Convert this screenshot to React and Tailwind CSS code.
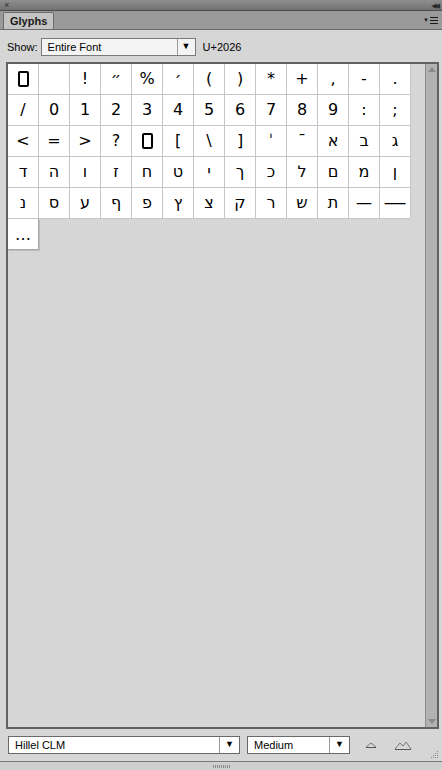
import React from "react";

const rows = [
  ["box", " ", "!", "״", "%", "׳", "(", ")", "*", "+", ",", "-", "."],
  ["/", "0", "1", "2", "3", "4", "5", "6", "7", "8", "9", ":", ";"],
  ["<", "=", ">", "?", "box", "[", "\\", "]", "ˈ", "ˉ", "א", "ב", "ג"],
  ["ד", "ה", "ו", "ז", "ח", "ט", "י", "ך", "כ", "ל", "ם", "מ", "ן"],
  ["נ", "ס", "ע", "ף", "פ", "ץ", "צ", "ק", "ר", "ש", "ת", "—", "wide"],
];

const Cell = ({ g }) => (
  <div className="w-[31px] h-[31px] bg-white border-r border-b border-[#c6c6c6] flex items-center justify-center text-[16px] text-black leading-none font-['DejaVu_Sans',sans-serif]">
    {g === "box" ? (
      <div className="w-[11px] h-[16px] border-2 border-black rounded-[2px]" />
    ) : g === "wide" ? (
      <span className="inline-block scale-x-[1.45]">—</span>
    ) : (
      <span>{g}</span>
    )}
  </div>
);

const Dropdown = ({ label, width, btn = 20 }) => (
  <div
    className="h-[18px] flex border border-[#6a6a6a] bg-white"
    style={{ width }}
  >
    <div className="flex-1 flex items-center pl-[6px] text-[11px] text-black">{label}</div>
    <div
      className="border-l border-[#9a9a9a] flex items-center justify-center text-[9px] text-black"
      style={{ width: btn }}
    >
      ▼
    </div>
  </div>
);

export default function App() {
  return (
    <div
      className="w-[442px] h-[770px] bg-[#d6d6d6] flex flex-col overflow-hidden"
      style={{ fontFamily: '"Liberation Sans", "DejaVu Sans", sans-serif' }}
    >
      {/* title strip */}
      <div className="h-[11px] bg-gradient-to-b from-[#8e8e8e] to-[#727272] border-b border-[#4a4a4a] flex items-center justify-between px-[4px] text-[9px] leading-none text-[#2a2a2a]">
        <span>×</span>
        <span className="text-[7px] tracking-[-2px]">◀◀</span>
      </div>

      {/* tab bar */}
      <div className="h-[19px] bg-[#9a9a9a] border-b border-[#6c6c6c] flex items-end justify-between pl-[3px] pr-[4px]">
        <div className="h-[17px] px-[6px] bg-[#c4c4c4] border border-b-0 border-[#6c6c6c] rounded-t-[2px] flex items-center text-[11px] font-bold text-[#1a1a1a]">
          Glyphs
        </div>
        <div className="h-full flex items-center gap-[1px] text-[#1a1a1a]">
          <span className="text-[6px]">▼</span>
          <svg width="8" height="7" viewBox="0 0 8 7">
            <rect x="0" y="0" width="8" height="1" fill="#1a1a1a" />
            <rect x="0" y="3" width="8" height="1" fill="#1a1a1a" />
            <rect x="0" y="6" width="8" height="1" fill="#1a1a1a" />
          </svg>
        </div>
      </div>

      {/* show row */}
      <div className="h-[32px] flex items-center pl-[7px] pt-[2px] text-[11px] text-black">
        <span className="mr-[3px]">Show:</span>
        <div className="w-[155px] h-[18px] flex border border-[#7a7a7a] bg-[#f4f4f4]">
          <div className="flex-1 flex items-center pl-[6px]">Entire Font</div>
          <div className="w-[18px] border-l border-[#9a9a9a] flex items-center justify-center text-[9px]">▼</div>
        </div>
        <span className="ml-[7px]">U+2026</span>
      </div>

      {/* glyph frame */}
      <div className="ml-[6px] mr-[3px] h-[667px] border-2 border-[#616161] flex">
        <div className="flex-1 flex flex-col">
          {rows.map((r, i) => (
            <div key={i} className="flex">
              {r.map((g, j) => (
                <Cell key={j} g={g} />
              ))}
            </div>
          ))}
          <div className="flex">
            <div className="w-[31px] h-[31px] bg-white border-r border-b border-[#a8a8a8] shadow-[1px_1px_0_#bdbdbd] flex items-end justify-center pb-[6px] text-[16px] leading-none font-['DejaVu_Sans',sans-serif]">
              …
            </div>
          </div>
        </div>
        <div className="w-[12px] bg-[#b2b2b2] border-l border-[#8e8e8e] flex flex-col justify-between items-center py-[3px]">
          <div className="w-0 h-0 border-l-[4px] border-r-[4px] border-b-[5px] border-l-transparent border-r-transparent border-b-[#8a8a8a]" />
          <div className="w-0 h-0 border-l-[4px] border-r-[4px] border-t-[5px] border-l-transparent border-r-transparent border-t-[#8a8a8a]" />
        </div>
      </div>

      {/* bottom controls */}
      <div className="h-[32px] flex items-center pl-[8px] pr-[3px]">
        <Dropdown label="Hillel CLM" width={232} />
        <div className="w-[7px]" />
        <Dropdown label="Medium" width={103} />
        <div className="ml-[15px] flex items-end">
          <svg width="12" height="6" viewBox="0 0 12 6">
            <path d="M1 5 L6 1 L11 5" fill="none" stroke="#777" strokeWidth="1" />
            <path d="M1 5.5 H11" stroke="#555" strokeWidth="1" />
          </svg>
        </div>
        <div className="ml-[17px] flex items-end">
          <svg width="18" height="9" viewBox="0 0 18 9">
            <path d="M1 8 L6 2 L9 5 L12 1 L17 8" fill="none" stroke="#777" strokeWidth="1" />
            <path d="M1 8.5 H17" stroke="#555" strokeWidth="1" />
          </svg>
        </div>
        <div className="ml-auto self-end mb-[2px]">
          <svg width="9" height="9" viewBox="0 0 9 9">
            <rect x="7" y="1" width="1" height="1" fill="#888" />
            <rect x="5" y="3" width="1" height="1" fill="#888" />
            <rect x="7" y="3" width="1" height="1" fill="#888" />
            <rect x="3" y="5" width="1" height="1" fill="#888" />
            <rect x="5" y="5" width="1" height="1" fill="#888" />
            <rect x="7" y="5" width="1" height="1" fill="#888" />
            <rect x="1" y="7" width="1" height="1" fill="#888" />
            <rect x="3" y="7" width="1" height="1" fill="#888" />
            <rect x="5" y="7" width="1" height="1" fill="#888" />
            <rect x="7" y="7" width="1" height="1" fill="#888" />
          </svg>
        </div>
      </div>

      {/* bottom grip strip */}
      <div className="flex-1 border-t border-[#7a7a7a] bg-[#cfcfcf] flex justify-center items-center">
        <div className="flex gap-[1px]">
          {Array.from({ length: 9 }).map((_, i) => (
            <div key={i} className="w-[1px] h-[3px] bg-[#8a8a8a]" />
          ))}
        </div>
      </div>
    </div>
  );
}
